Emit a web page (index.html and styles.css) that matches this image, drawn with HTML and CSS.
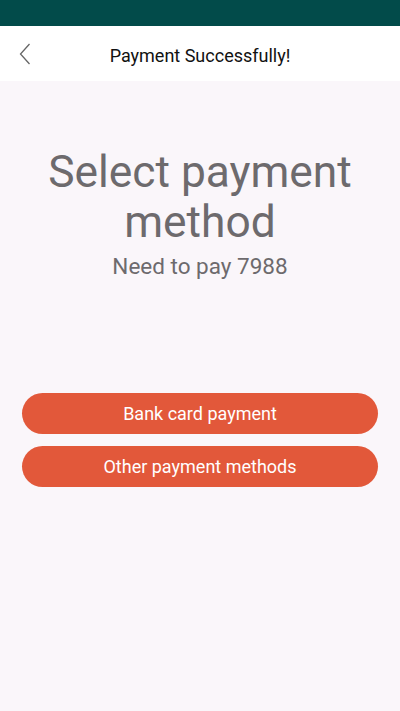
FILE: index.html
```html
<!DOCTYPE html>
<html>
<head>
<meta charset="utf-8">
<link rel="stylesheet" href="styles.css">
</head>
<body>
<div class="status"></div>
<header class="nav">
  <svg class="back" width="12" height="22" viewBox="0 0 12 22"><path d="M10.5 1 L1.5 11 L10.5 21" fill="none" stroke="#666" stroke-width="1.3"/></svg>
  <div class="nav-title">Payment Successfully!</div>
</header>
<main class="content">
  <h1 class="title">Select payment method</h1>
  <p class="amount">Need to pay 7988</p>
  <div class="buttons">
    <button class="btn">Bank card payment</button>
    <button class="btn">Other payment methods</button>
  </div>
</main>
</body>
</html>
```
FILE: styles.css
```css
* { box-sizing: border-box; }
html, body { margin: 0; padding: 0; }
body {
  width: 400px;
  height: 711px;
  background: #faf6fa;
  font-family: Roboto, "Liberation Sans", sans-serif;
  overflow: hidden;
}
.status {
  height: 26px;
  background: #024b4a;
}
.nav {
  position: relative;
  height: 55px;
  padding-top: 3px;
  background: #fff;
  display: flex;
  align-items: center;
  justify-content: center;
}
.back {
  position: absolute;
  left: 19px;
  top: 17px;
}
.nav-title {
  font-size: 18px;
  color: #111;
}
.content {
  display: flex;
  flex-direction: column;
  align-items: center;
}
.title {
  margin: 66px 0 0;
  width: 330px;
  text-align: center;
  font-weight: 400;
  font-size: 44.3px;
  line-height: 50px;
  color: #6d6a6d;
}
.amount {
  margin: 6px 0 0;
  font-size: 22.5px;
  line-height: 26px;
  color: #6d6a6d;
}
.buttons {
  margin-top: 114px;
  width: 356px;
  display: flex;
  flex-direction: column;
  gap: 12px;
}
.btn {
  height: 41px;
  border: none;
  border-radius: 21px;
  background: #e2583a;
  color: #fff;
  font-family: Roboto, "Liberation Sans", sans-serif;
  font-size: 18px;
  padding: 0;
}
```
